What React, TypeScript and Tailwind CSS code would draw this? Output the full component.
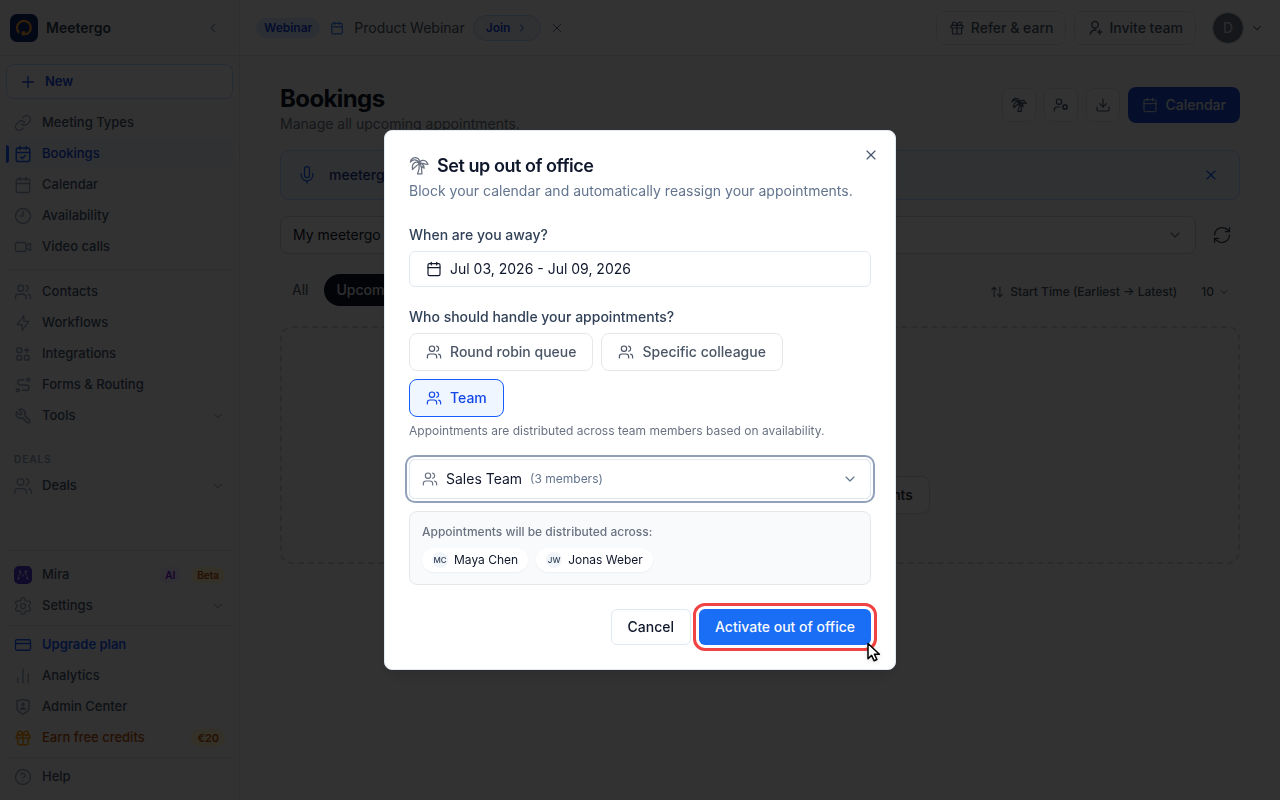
import { useState } from 'react';
import type { ReactNode } from 'react';
import {
  ArrowUpDown,
  Calendar,
  CalendarCheck,
  ChartNoAxesColumn,
  ChevronDown,
  ChevronLeft,
  ChevronRight,
  CircleHelp,
  Clock9,
  CreditCard,
  Download,
  Gift,
  Link,
  Mic,
  Plus,
  RefreshCw,
  Settings,
  UserCog,
  Users,
  Video,
  X,
} from 'lucide-react';
import { TbApps, TbBolt, TbRoute, TbTool } from 'react-icons/tb';
import { RiShieldUserLine, RiUserAddLine } from 'react-icons/ri';

type NavItem = {
  label: string;
  icon: ReactNode;
  active?: boolean;
  expandable?: boolean;
};

const mainNav: NavItem[] = [
  { label: 'Meeting Types', icon: <Link size={18} strokeWidth={1.75} /> },
  { label: 'Bookings', icon: <CalendarCheck size={18} strokeWidth={2} />, active: true },
  { label: 'Calendar', icon: <Calendar size={18} strokeWidth={1.75} /> },
  { label: 'Availability', icon: <Clock9 size={18} strokeWidth={1.75} /> },
  { label: 'Video calls', icon: <Video size={18} strokeWidth={1.75} /> },
];

const toolsNav: NavItem[] = [
  { label: 'Contacts', icon: <Users size={18} strokeWidth={1.75} /> },
  { label: 'Workflows', icon: <TbBolt size={20} strokeWidth={1.5} /> },
  { label: 'Integrations', icon: <TbApps size={18} strokeWidth={2} /> },
  { label: 'Forms & Routing', icon: <TbRoute size={18} strokeWidth={2} /> },
  { label: 'Tools', icon: <TbTool size={18} strokeWidth={2} />, expandable: true },
];

const handlers = ['Round robin queue', 'Specific colleague', 'Team'];

const members = [
  { initials: 'MC', name: 'Maya Chen' },
  { initials: 'JW', name: 'Jonas Weber' },
];

function Logo() {
  return (
    <svg width="28" height="28" viewBox="0 0 28 28" className="shrink-0">
      <rect width="28" height="28" rx="7" fill="#0b2a6b" />
      <path d="M8.6 18.2A6.9 6.9 0 1 1 16.5 20.2" fill="none" stroke="#f9a13a" strokeWidth="2.2" strokeLinecap="round" />
      <circle cx="13.6" cy="19.4" r="2.3" fill="#f9a13a" />
    </svg>
  );
}

function PalmIcon({ size, strokeWidth = 1.5 }: { size: number; strokeWidth?: number }) {
  return (
    <svg
      width={size}
      height={size}
      viewBox="0 0 24 24"
      fill="none"
      stroke="currentColor"
      strokeWidth={strokeWidth}
      strokeLinecap="round"
      strokeLinejoin="round"
    >
      <path d="M12.5 8.5C10 4.5 5 3 1.6 7.2 2 4 5.5 1.2 9 2.2c2.600.7 3.900 3.300 3.500 6.300z" />
      <path d="M12.500 8.500C7.500 5.500 2.800 9.500 4.300 16.200c1.200-.8 1.900-1.700 2.500-2.900.9.200 1.500-.2 2-1.600 1.500-.3 2.700-1.300 3.700-3.200z" />
      <path d="M12.500 8.500C13.500 4 20.500 3.500 22.800 10.200c-1.600-.6-2.600-.8-3.800-.4-.9-.9-1.800-1.200-3-.7-1.200-.7-2.200-.9-3.500-.6z" />
      <path d="M12.500 8.500c3.500.2 5.500 2.500 5.700 6.200-1.300-.4-2.200-1.200-2.700-2.400" />
      <path d="M12.200 9.200c.6 4.300-.3 8.300-2 12.300h5.300c.2-4.500-.3-8.500-2-12.500" />
    </svg>
  );
}

function MiraIcon() {
  return (
    <svg width="18" height="18" viewBox="0 0 18 18">
      <rect width="18" height="18" rx="5" fill="#4f35d8" />
      <path d="M4.500 12.500 6.200 5.500 9 10.500 11.800 5.500 13.500 12.500" fill="none" stroke="#a79bf0" strokeWidth="1" strokeLinejoin="round" strokeLinecap="round" />
      <circle cx="4.500" cy="12.500" r="0.9" fill="#fff" />
      <circle cx="13.500" cy="12.500" r="0.9" fill="#fff" />
      <circle cx="6.200" cy="5.500" r="0.9" fill="#fff" />
      <circle cx="11.800" cy="5.500" r="0.9" fill="#fff" />
    </svg>
  );
}

function NavLink({
  label,
  icon,
  active,
  expandable,
  tone = 'text-slate-600',
  iconTone = 'text-slate-400',
  children,
}: NavItem & { tone?: string; iconTone?: string; children?: ReactNode }) {
  return (
    <a
      href="#"
      className={`relative flex h-[30px] shrink-0 items-center gap-2.5 rounded-lg pl-2 pr-2 text-[13px] font-medium ${
        active ? 'bg-blue-50 text-blue-700' : tone
      }`}
    >
      {active && <span className="absolute left-0 top-1.5 h-[18px] w-[3px] rounded-r bg-blue-600" />}
      <span className={`flex size-[18px] shrink-0 items-center justify-center ${active ? 'text-blue-600' : iconTone}`}>
        <span className="shrink-0">{icon}</span>
      </span>
      <span className="flex-1">{label}</span>
      {children}
      {expandable && <ChevronDown size={14} strokeWidth={1.75} className="text-slate-400" />}
    </a>
  );
}

function Sidebar() {
  return (
    <aside className="flex min-h-screen w-60 shrink-0 flex-col border-r border-gray-200 bg-[#fbfbfc]">
      <div className="flex h-14 items-center gap-2 border-b border-gray-200 px-2.5">
        <Logo />
        <span className="flex-1 text-sm font-semibold text-slate-700">Meetergo</span>
        <button aria-label="Collapse sidebar" className="mr-2 text-slate-400">
          <ChevronLeft size={16} strokeWidth={1.75} />
        </button>
      </div>
      <nav className="flex flex-1 flex-col px-1.5 pb-2 pt-2">
        <button className="mb-[9px] flex h-[35px] shrink-0 items-center gap-2 rounded-lg border border-blue-200 bg-white px-3 text-[13px] font-semibold text-blue-700">
          <Plus size={18} strokeWidth={1.75} />
          New
        </button>
        <div className="flex flex-col gap-px">
          {mainNav.map((item) => (
            <NavLink key={item.label} {...item} />
          ))}
        </div>
        <hr className="my-[7px] border-gray-200" />
        <div className="flex flex-col gap-px">
          {toolsNav.map((item) => (
            <NavLink key={item.label} {...item} />
          ))}
        </div>
        <div className="mb-1 mt-5 pl-2 text-[10px] font-semibold leading-4 tracking-widest text-slate-400">DEALS</div>
        <NavLink label="Deals" icon={<Users size={20} strokeWidth={1.5} />} expandable />

        <div className="mt-auto flex flex-col gap-px">
          <hr className="mb-2 border-gray-200" />
          <NavLink label="Mira" icon={<MiraIcon />}>
            <span className="rounded-full bg-violet-100 px-1.5 text-[10px] font-semibold leading-4 text-violet-700">AI</span>
            <span className="rounded-full bg-amber-100 px-1.5 text-[10px] font-semibold leading-4 text-amber-700">Beta</span>
          </NavLink>
          <NavLink label="Settings" icon={<Settings size={20} strokeWidth={1.5} />} expandable />
          <hr className="my-[3px] border-gray-200" />
          <a href="#" className="flex h-[30px] items-center gap-2.5 px-2 text-[13px] font-semibold text-blue-600">
            <CreditCard size={18} strokeWidth={1.75} />
            Upgrade plan
          </a>
          <NavLink label="Analytics" icon={<ChartNoAxesColumn size={18} strokeWidth={1.75} />} />
          <NavLink label="Admin Center" icon={<RiShieldUserLine size={18} />} />
          <NavLink label="Earn free credits" icon={<Gift size={18} strokeWidth={2} />} tone="text-amber-700" iconTone="text-amber-500">
            <span className="rounded-full bg-amber-100 px-1.5 text-[11px] font-semibold leading-[18px] text-amber-700">€20</span>
          </NavLink>
          <hr className="my-[3px] border-gray-200" />
          <NavLink label="Help" icon={<CircleHelp size={18} strokeWidth={1.75} />} />
        </div>
      </nav>
    </aside>
  );
}

function TopBar() {
  return (
    <header className="flex h-14 items-center border-b border-gray-200 bg-white px-4">
      <span className="rounded-full bg-blue-100 px-2 text-xs font-semibold leading-5 text-blue-700">Webinar</span>
      <Calendar size={14} strokeWidth={2} className="ml-2.5 text-blue-500" />
      <span className="ml-2.5 text-sm text-gray-600">Product Webinar</span>
      <button className="ml-2 flex h-[26px] items-center gap-1.5 rounded-full border border-blue-200 bg-blue-50 px-3 text-xs font-semibold text-blue-700">
        Join
        <ChevronRight size={12} />
      </button>
      <button aria-label="Dismiss webinar" className="ml-2 text-gray-500">
        <X size={16} strokeWidth={1.5} />
      </button>
      <div className="ml-auto flex items-center gap-2">
        <button className="flex h-[34px] items-center gap-1.5 rounded-lg border border-gray-200 px-3 text-sm font-medium text-slate-600">
          <Gift size={16} strokeWidth={1.75} />
          Refer &amp; earn
        </button>
        <button className="flex h-[34px] items-center gap-1.5 rounded-lg border border-gray-200 px-3 text-sm font-medium text-slate-600">
          <RiUserAddLine size={16} />
          Invite team
        </button>
        <button aria-label="Account" className="ml-2 flex items-center gap-1.5 text-slate-600">
          <span className="flex size-8 items-center justify-center rounded-full border border-gray-200 bg-gray-500 text-sm font-medium text-gray-300">D</span>
          <ChevronDown size={14} strokeWidth={1.75} />
        </button>
      </div>
    </header>
  );
}

function BookingsPage() {
  const iconButton = 'flex size-[34px] items-center justify-center rounded-lg border border-gray-200 bg-[#fdfdfd] text-slate-600';
  return (
    <main className="flex-1 bg-[#f7faf9] px-10 pt-7">
      <div className="flex items-center justify-between">
        <div>
          <h1 className="text-2xl font-bold leading-[30px] tracking-tight text-gray-900">Bookings</h1>
          <p className="text-sm text-gray-500">Manage all upcoming appointments.</p>
        </div>
        <div className="mb-2 flex items-center gap-2">
          <button aria-label="Out of office" className={iconButton}>
            <PalmIcon size={16} strokeWidth={1.75} />
          </button>
          <button aria-label="Booking settings" className={iconButton}>
            <UserCog size={16} strokeWidth={1.75} />
          </button>
          <button aria-label="Download" className={iconButton}>
            <Download size={16} strokeWidth={1.75} />
          </button>
          <button className="flex h-9 items-center gap-2 rounded-lg bg-[#1d4ed8] px-3.5 text-sm font-medium text-gray-200">
            <Calendar size={16} strokeWidth={1.5} />
            Calendar
          </button>
        </div>
      </div>

      <div className="mt-4 flex h-[50px] items-center rounded-lg border border-blue-200 bg-[#f1f4fc] px-4">
        <Mic size={20} strokeWidth={1.5} className="text-blue-600" />
        <p className="ml-3 flex-1 text-sm font-medium text-blue-900">meetergo</p>
        <button aria-label="Dismiss" className="mr-1 text-blue-600">
          <X size={16} strokeWidth={1.75} />
        </button>
      </div>

      <div className="mt-4 flex items-center gap-4">
        <div className="flex h-[38px] flex-1 items-center rounded-lg border border-gray-300 bg-[#fdfdfd] px-3">
          <select aria-label="Booking scope" className="flex-1 appearance-none bg-transparent text-sm text-gray-900">
            <option>My meetergo</option>
          </select>
          <ChevronDown size={16} strokeWidth={1.75} className="text-gray-500" />
        </div>
        <button aria-label="Refresh" className="mr-2 text-gray-700">
          <RefreshCw size={20} strokeWidth={1.5} />
        </button>
      </div>

      <div className="mt-5 flex items-center">
        <button className="px-3 text-sm text-gray-600">All</button>
        <button className="ml-1 h-8 rounded-full bg-slate-900 px-3 text-sm font-medium text-gray-200">Upcoming</button>
        <button className="ml-auto flex items-center gap-1.5 pt-1 text-xs font-medium text-gray-600">
          <ArrowUpDown size={14} strokeWidth={1.75} />
          Start Time (Earliest → Latest)
        </button>
        <div className="ml-6 mr-2.5 flex items-center gap-1 pt-1 text-gray-600">
          <select aria-label="Rows per page" className="field-sizing-content appearance-none text-xs font-medium">
            <option>10</option>
          </select>
          <ChevronDown size={12} />
        </div>
      </div>

      <div className="mt-5 flex h-[238px] flex-col items-center justify-end rounded-xl border-2 border-dashed border-gray-300 pb-12">
        <div className="flex gap-2">
          <button className="h-[38px] rounded-lg border border-gray-300 bg-[#fdfdfd] px-4 text-sm font-medium text-gray-800">Create booking</button>
          <button className="h-[38px] rounded-lg border border-gray-300 bg-[#fdfdfd] px-4 text-sm font-medium text-gray-800">View past appointments</button>
        </div>
      </div>
    </main>
  );
}

function OutOfOfficeDialog() {
  const [handler, setHandler] = useState('Team');

  return (
    <div className="fixed inset-0 flex items-center justify-center bg-black/80">
      <div
        role="dialog"
        aria-modal="true"
        aria-labelledby="ooo-title"
        className="relative w-full max-w-lg rounded-lg border border-slate-200 bg-white p-6 shadow-lg"
      >
        <button aria-label="Close" className="absolute right-4 top-4 text-slate-600">
          <X size={16} strokeWidth={1.75} />
        </button>

        <h2 id="ooo-title" className="flex h-[22px] items-center gap-2 text-lg font-semibold tracking-tight text-slate-900">
          <span className="text-gray-500">
            <PalmIcon size={20} />
          </span>
          Set up out of office
        </h2>
        <p className="mt-1 text-sm text-slate-500">Block your calendar and automatically reassign your appointments.</p>

        <div className="mt-6 flex flex-col gap-1.5">
          <label htmlFor="away-dates" className="text-sm font-medium text-slate-700">When are you away?</label>
          <button id="away-dates" className="flex h-9 items-center gap-2 rounded-md border border-slate-200 px-4 text-sm text-slate-900">
            <Calendar size={16} strokeWidth={1.75} />
            Jul 03, 2026 - Jul 09, 2026
          </button>
        </div>

        <div className="mt-5 flex flex-col gap-1.5">
          <span id="handler-label" className="text-sm font-medium text-slate-700">Who should handle your appointments?</span>
          <div role="group" aria-labelledby="handler-label" className="flex flex-wrap gap-2">
            {handlers.map((name) => (
              <button
                key={name}
                aria-pressed={handler === name}
                onClick={() => setHandler(name)}
                className={`flex h-[38px] items-center gap-2 rounded-lg border px-4 text-sm font-medium ${
                  handler === name ? 'border-blue-600 bg-blue-50 text-blue-700' : 'border-gray-200 bg-white text-gray-600'
                }`}
              >
                <Users size={16} strokeWidth={1.75} />
                {name}
              </button>
            ))}
          </div>
          <p className="text-xs text-gray-500">Appointments are distributed across team members based on availability.</p>
        </div>

        <div className="mt-5 flex h-10 items-center rounded-md border border-slate-200 pl-3 pr-3 ring-2 ring-slate-400 ring-offset-2">
          <Users size={16} strokeWidth={1.75} className="text-gray-500" />
          <select aria-label="Team" className="field-sizing-content ml-2 appearance-none text-sm text-slate-900 outline-none">
            <option>Sales Team</option>
          </select>
          <span className="ml-2 text-xs text-slate-500">(3 members)</span>
          <ChevronDown size={16} strokeWidth={1.75} className="ml-auto text-slate-500" />
        </div>

        <div className="mt-3 rounded-lg border border-gray-200 bg-gray-50 p-3">
          <p className="text-xs font-medium text-gray-500">Appointments will be distributed across:</p>
          <div className="mt-2 flex gap-2">
            {members.map((member) => (
              <span key={member.name} className="flex h-6 items-center gap-1.5 rounded-full bg-white px-2.5 text-xs text-slate-900 shadow-xs">
                <span className="flex size-4 items-center justify-center rounded-full bg-slate-100 text-[8px] font-medium text-slate-700">
                  {member.initials}
                </span>
                {member.name}
              </span>
            ))}
          </div>
        </div>

        <div className="mt-6 flex justify-end gap-2">
          <button className="h-9 rounded-md border border-slate-200 bg-white px-4 text-sm font-medium text-slate-900">Cancel</button>
          <div className="relative">
            <button className="h-9 rounded-md bg-[#1a6df5] px-4 text-sm font-medium text-slate-50 outline-3 outline-offset-3 outline-[#f04444]">
              Activate out of office
            </button>
            <svg width="20" height="24" viewBox="0 0 20 24" className="absolute -bottom-5 -right-3.5 drop-shadow-sm">
              <path
                d="M3 2.500v15.200l3.600-3.300 2.500 5.300 2.800-1.200-2.500-5.300h5z"
                fill="#fff"
                stroke="#000"
                strokeWidth="1.5"
                strokeLinejoin="round"
              />
            </svg>
          </div>
        </div>
      </div>
    </div>
  );
}

export default function App() {
  return (
    <div className="flex min-h-screen font-['Inter',sans-serif]">
      <Sidebar />
      <div className="flex min-w-0 flex-1 flex-col">
        <TopBar />
        <BookingsPage />
      </div>
      <OutOfOfficeDialog />
    </div>
  );
}
